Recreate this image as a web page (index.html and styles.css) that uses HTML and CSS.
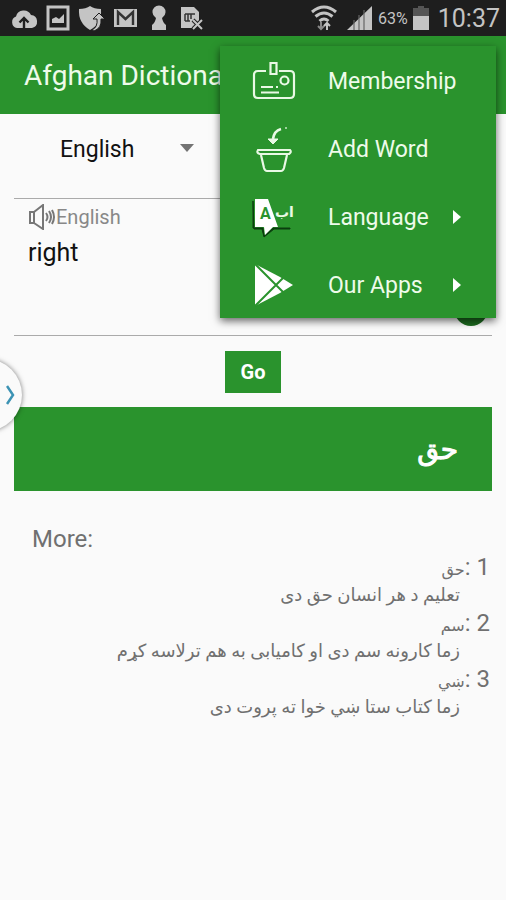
FILE: index.html
```html
<!DOCTYPE html>
<html lang="en">
<head>
    <meta charset="UTF-8">
    <meta name="viewport" content="width=device-width, initial-scale=1.0">
    <title>Afghan Dictionary</title>
    <link rel="stylesheet" href="styles.css">
</head>
<body>
    <div class="status-bar">
        <div class="status-icons">
            <svg width="28" height="24" viewBox="0 0 28 24" fill="#c4c4c4"><path d="M7 22a6 6 0 0 1-1-11.500A8 8 0 0 1 21 9a6.600 6.600 0 0 1 1 13z"/><path d="M14 22v-9M9.500 16.500L14 12l4.500 4.500" fill="none" stroke="#1e1e1e" stroke-width="2.400"/></svg>
            <svg width="24" height="26" viewBox="0 0 24 26"><path d="M2 2h20v22H2z" fill="none" stroke="#c4c4c4" stroke-width="3"/><path d="M6 18v-4l4-2 3 2 5-5v9z" fill="#c4c4c4"/></svg>
            <svg width="27" height="26" viewBox="0 0 27 26"><path d="M1 4q7 0 11-3 4 3 11 3 1 15-11 21Q0 18 1 4z" fill="#c4c4c4"/><path d="M14 25q6-3 5-11h-4l6-6 6 6h-4q1 9-7 12z" fill="#c4c4c4" stroke="#1e1e1e"/></svg>
            <svg width="25" height="20" viewBox="0 0 25 20"><path d="M1 1h23v18H1z" fill="#c4c4c4"/><path d="M5 17V4l7.500 7L20 4v13" fill="none" stroke="#333" stroke-width="2.400"/></svg>
            <svg class="keyhole" width="16" height="26" viewBox="0 0 16 26" fill="#c4c4c4"><path d="M4 12a6.500 6.500 0 1 1 8 0l-1 1q1 5 4 7v5H1v-5q3-2 4-7z"/></svg>
            <svg width="24" height="26" viewBox="0 0 24 26"><path d="M1 2h13l5 5v10l-4 6H1z" fill="#c4c4c4"/><path d="M5 9h10M5 9v7m3-7v7m3-7v5M5 16h5" fill="none" stroke="#333" stroke-width="1.500"/><path d="M13 15l9 9m0-9l-9 9" stroke="#1e1e1e" stroke-width="4"/><path d="M13 15l9 9m0-9l-9 9" stroke="#c4c4c4" stroke-width="2"/></svg>
        </div>
        <div class="status-info">
            <svg width="26" height="26" viewBox="0 0 26 26" fill="none" stroke="#c4c4c4" stroke-width="3"><path d="M1 7q12-10 24 0M4.500 11.500q8.500-7 17 0M8.500 16q4.500-4 9 0"/><path d="M10 17v7m-3-3l3 3 3-3" stroke="#888" stroke-width="2"/><path d="M16 25v-7m-3 3l3-3 3 3" stroke-width="2"/></svg>
            <svg class="signal" width="26" height="24" viewBox="0 0 26 24"><path d="M25 0v24H0z" fill="#c4c4c4"/><path d="M7 14v10m5-15v15m5-20v20" stroke="#666" stroke-width="1.200"/></svg>
            <span class="battery-level">63%</span>
            <svg width="16" height="24" viewBox="0 0 16 24"><path d="M5 0h6v2h5v8H0V2h5z" fill="#555"/><path d="M0 10h16v14H0z" fill="#c4c4c4"/></svg>
            <span class="clock">10:37</span>
        </div>
    </div>

    <header class="app-bar">
        <h1>Afghan Dictionary</h1>
    </header>

    <nav class="menu">
        <a class="menu-item" href="#membership">
            <svg class="menu-icon" width="44" height="42" viewBox="0 0 44 42" fill="none" stroke="#e9f9e5" stroke-width="2.200"><path d="M14 11H6q-4 0-4 4v19q0 4 4 4h32q4 0 4-4V15q0-4-4-4H27M18.500 3h6v11h-6z"/><circle cx="32.500" cy="20.500" r="4"/><path d="M9 27h12m3 0h2M9 32.500h18"/></svg>
            <span>Membership</span>
        </a>
        <a class="menu-item" href="#add-word">
            <svg class="menu-icon" width="44" height="48" viewBox="0 0 44 48" fill="none" stroke="#e9f9e5" stroke-width="2.200"><path d="M6 25h32q2 2-1 4H8q-4-1-2-4zM9 30l3 13q1 3 3 3h14q2 0 3-3l3-13"/><path d="M29 4q-7 2-8 10" stroke-width="2.600"/><path d="M16 14h10l-5 5z" fill="#e9f9e5" stroke-width="1"/><path d="M33 3h2" opacity=".6"/></svg>
            <span>Add Word</span>
        </a>
        <a class="menu-item" href="#language">
            <svg class="menu-icon" width="44" height="42" viewBox="0 0 44 42"><path d="M1 5v27h10l1 8 9-8h17v1H22l-10 8-2-8H2z" fill="#0b3d0e" stroke="#0b3d0e"/><path d="M3 3h13l10 28h-5l-8 8-1-8H3z" fill="#fff"/><text class="icon-latin" x="8" y="23">A</text><text class="icon-arabic" x="23" y="21">اب</text></svg>
            <span>Language</span>
            <svg class="menu-arrow" width="10" height="16" viewBox="0 0 10 16"><path d="M1 1v14l8-7z" fill="#fff"/></svg>
        </a>
        <a class="menu-item" href="#our-apps">
            <svg class="menu-icon" width="44" height="44" viewBox="0 0 44 44"><path d="M3 1l25 13 13 8-13 8L3 43z" fill="#fff"/><path d="M3 1l28 28M3 43l28-28" stroke="#2a932d" stroke-width="2"/></svg>
            <span>Our Apps</span>
            <svg class="menu-arrow" width="10" height="16" viewBox="0 0 10 16"><path d="M1 1v14l8-7z" fill="#fff"/></svg>
        </a>
    </nav>

    <button class="side-handle" type="button" aria-label="Open panel">
        <svg width="9" height="20" viewBox="0 0 9 20"><path d="M1 1l6 9-6 9" fill="none" stroke="#3c93b4" stroke-width="2.500"/></svg>
    </button>

    <main class="content">
        <div class="language-row">
            <select class="language-select" aria-label="Source language">
                <option>English</option>
            </select>
            <svg class="select-arrow" width="14" height="8" viewBox="0 0 14 8"><path d="M0 0h14L7 8z" fill="#737373"/></svg>
        </div>

        <form class="word-box">
            <label class="word-label" for="word">
                <svg width="28" height="26" viewBox="0 0 28 26" fill="none" stroke="#777" stroke-width="2"><path d="M2 8h4v11H2zM6 8l9-7v24l-9-6"/><path d="M18 9q3 4 0 8M21 7q4 6 0 12M24 6q4 7 0 14" stroke-width="2"/></svg>
                <span>English</span>
            </label>
            <textarea id="word" rows="2">right</textarea>
            <button class="add-button" type="button" aria-label="Add">
                <svg width="16" height="16" viewBox="0 0 16 16"><path d="M8 1v14M1 8h14" stroke="#fff" stroke-width="2"/></svg>
            </button>
        </form>

        <button class="go-button" type="button">Go</button>

        <div class="result" lang="ps" dir="rtl">حق</div>

        <section class="more">
            <h2>More:</h2>
            <dl lang="ps" dir="rtl">
                <dt>1 :<span>حق</span></dt>
                <dd>تعلیم د هر انسان حق دی</dd>
                <dt>2 :<span>سم</span></dt>
                <dd>زما کارونه سم دی او کامیابی به هم ترلاسه کړم</dd>
                <dt>3 :<span>ښي</span></dt>
                <dd>زما کتاب ستا ښي خوا ته پروت دی</dd>
            </dl>
        </section>
    </main>
</body>
</html>
```
FILE: styles.css
```css
* {
    box-sizing: border-box;
    margin: 0;
    padding: 0;
}

body {
    position: relative;
    min-height: 100vh;
    font-family: Roboto, "DejaVu Sans", sans-serif;
    background-color: #fafafa;
    color: #111;
    overflow-x: hidden;
}

svg {
    flex-shrink: 0;
}

/* status bar */
.status-bar {
    display: flex;
    justify-content: space-between;
    align-items: center;
    height: 36px;
    padding: 0 6px 0 10px;
    background-color: #1e1e1e;
    color: #c4c4c4;
}

.status-icons,
.status-info {
    display: flex;
    align-items: center;
}

.status-icons {
    gap: 8px;
}

.keyhole {
    margin: 0 5px;
}

.status-info {
    gap: 5px;
}

.signal {
    margin-left: 5px;
}

.battery-level {
    font-size: 16px;
}

.clock {
    font-size: 25px;
    padding-left: 4px;
}

/* app bar */
.app-bar {
    display: flex;
    align-items: center;
    height: 78px;
    padding: 0 24px;
    background-color: #2a932d;
}

.app-bar h1 {
    font-size: 28px;
    font-weight: 400;
    color: #eefbea;
}

/* popup menu */
.menu {
    position: absolute;
    top: 46px;
    right: 10px;
    z-index: 2;
    width: 276px;
    background-color: #2a932d;
    box-shadow: 0 3px 8px rgba(0, 0, 0, 0.6);
}

.menu-item {
    display: flex;
    align-items: center;
    height: 68px;
    padding: 2px 34px 0 32px;
    font-size: 23px;
    white-space: nowrap;
    color: #eefbea;
    text-decoration: none;
}

.menu-icon {
    margin-right: 32px;
}

.menu-arrow {
    margin-left: auto;
}

.icon-latin {
    font-size: 16px;
    font-weight: 700;
    fill: #2a932d;
}

.icon-arabic {
    font-size: 14px;
    font-weight: 700;
    fill: #e9f9e5;
}

/* edge handle */
.side-handle {
    position: absolute;
    top: 359px;
    left: -50px;
    display: flex;
    justify-content: flex-end;
    align-items: center;
    width: 72px;
    height: 72px;
    padding-right: 7px;
    border: none;
    border-radius: 50%;
    background-color: #fafafa;
    box-shadow: 0 0 5px rgba(0, 0, 0, 0.5);
}

.content {
    padding: 0 14px;
}

.language-row {
    display: flex;
    align-items: flex-start;
    height: 84px;
    padding: 20px 0 0 46px;
}

.language-select {
    appearance: none;
    width: 120px;
    height: 30px;
    border: none;
    background: transparent;
    font-family: inherit;
    font-size: 23px;
    color: #111;
}

.select-arrow {
    margin-top: 10px;
}

.word-box {
    position: relative;
    height: 138px;
    padding: 5px 14px;
    border-top: 1px solid #aaa;
    border-bottom: 1px solid #aaa;
}

.word-label {
    display: flex;
    align-items: center;
    height: 26px;
    font-size: 20px;
    color: #888;
}

.word-box textarea {
    display: block;
    width: 100%;
    height: 80px;
    padding-top: 7px;
    border: none;
    outline: none;
    resize: none;
    background: transparent;
    font-family: inherit;
    font-size: 25px;
    line-height: 32px;
    color: #111;
}

.add-button {
    position: absolute;
    right: 4px;
    bottom: 9px;
    display: flex;
    justify-content: center;
    align-items: center;
    width: 34px;
    height: 34px;
    border: none;
    border-radius: 50%;
    background-color: #1c6a1f;
}

.go-button {
    display: block;
    width: 56px;
    height: 42px;
    margin: 15px auto 14px;
    border: none;
    background-color: #2a932d;
    font-family: inherit;
    font-size: 20px;
    font-weight: 700;
    color: #fff;
}

.result {
    display: flex;
    align-items: center;
    height: 84px;
    padding: 0 34px;
    background-color: #2a932d;
    font-size: 28px;
    color: #fff;
    -webkit-text-stroke: 1px #fff;
}

.more {
    padding: 34px 2px 0 18px;
    color: #707070;
}

.more h2 {
    font-size: 24px;
    font-weight: 400;
    line-height: 28px;
}

.more dt {
    height: 28px;
    font-size: 24px;
    line-height: 28px;
}

.more dt span {
    font-size: 16px;
    line-height: 1;
}

.more dd {
    height: 28px;
    padding-right: 30px;
    font-size: 18px;
    line-height: 28px;
}
```
